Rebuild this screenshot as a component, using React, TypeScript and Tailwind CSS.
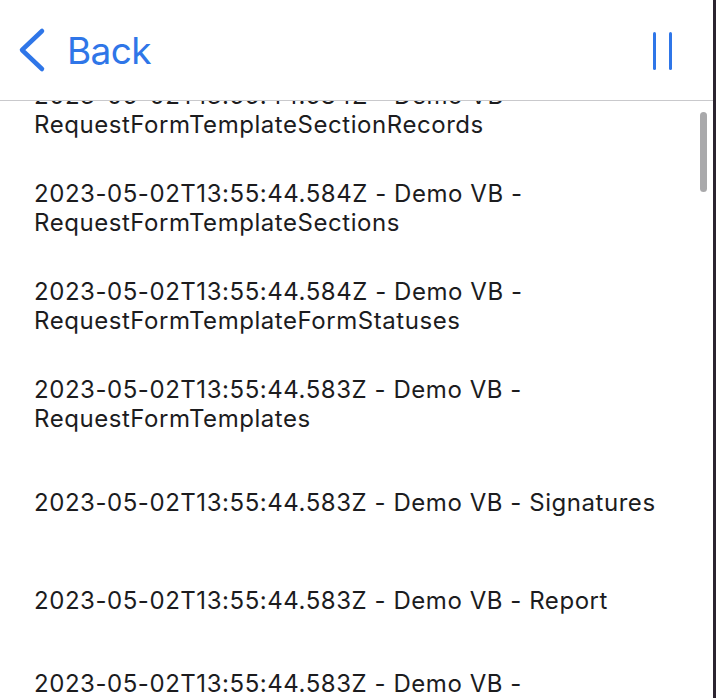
import React from "react";

const items: string[][] = [
  ["2023-05-02T13:55:44.584Z - Demo VB -", "RequestFormTemplateSectionRecords"],
  ["2023-05-02T13:55:44.584Z - Demo VB -", "RequestFormTemplateSections"],
  ["2023-05-02T13:55:44.584Z - Demo VB -", "RequestFormTemplateFormStatuses"],
  ["2023-05-02T13:55:44.583Z - Demo VB -", "RequestFormTemplates"],
  ["2023-05-02T13:55:44.583Z - Demo VB - Signatures"],
  ["2023-05-02T13:55:44.583Z - Demo VB - Report"],
  ["2023-05-02T13:55:44.583Z - Demo VB -", "RequestFormTemplateFields"],
];

export default function App() {
  return (
    <div
      className="relative w-[716px] h-[698px] overflow-hidden bg-white"
      style={{ fontFamily: "Inter, 'Liberation Sans', sans-serif" }}
    >
      <div className="flex h-[101px] items-center justify-between border-b border-[#c9c9cc] bg-white pl-[16px] pr-[44px]">
        <div className="flex items-center gap-[21px] text-[#2f76e8]">
          <svg width="30" height="46" viewBox="0 0 30 46" fill="none">
            <path d="M26 4 L6 23 L26 42" stroke="#2f76e8" strokeWidth="4.5" strokeLinecap="round" strokeLinejoin="round" />
          </svg>
          <span className="text-[37px] leading-none tracking-[-0.6px]">Back</span>
        </div>
        <div className="flex gap-[13px] pt-[2px]">
          <div className="h-[38px] w-[3px] rounded-full bg-[#2f76e8]" />
          <div className="h-[38px] w-[3px] rounded-full bg-[#2f76e8]" />
        </div>
      </div>
      <div className="relative h-[597px] overflow-hidden">
        <div className="-mt-[40px] flex flex-col">
          {items.map((lines, i) => (
            <div key={i} className="flex h-[98px] flex-col justify-center pl-[34px] text-[24px] leading-[29px] tracking-[0.55px] text-[#1c1c1e]">
              {lines.map((l, j) => (
                <div key={j} className="whitespace-nowrap">{l}</div>
              ))}
            </div>
          ))}
        </div>
        <div className="absolute right-[9px] top-[11px] h-[80px] w-[7px] rounded-full bg-[#a9a9ab]" />
      </div>
      <div className="absolute right-0 top-0 h-full w-[3px] bg-[#2b2430]" />
    </div>
  );
}
